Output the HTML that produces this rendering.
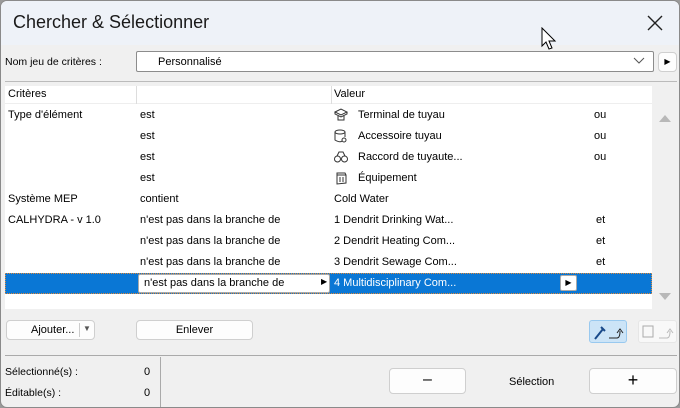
<!DOCTYPE html>
<html><head><meta charset="utf-8"><style>
*{box-sizing:border-box;margin:0;padding:0}
body{width:680px;height:408px;background:#9a9a9a;font-family:"Liberation Sans",sans-serif;font-size:11px;color:#000;overflow:hidden;position:relative}
.win{position:absolute;left:0;top:0;width:680px;height:408px;background:#f0f0f0;border:1px solid #8a8a8a;border-radius:7px;overflow:hidden}
.title{position:absolute;left:0;top:0;width:680px;height:44px;background:#eef2f8}
.t{position:absolute;white-space:nowrap}
.btn{position:absolute;background:#fdfdfd;border:1px solid #cfcfcf;border-radius:4px;text-align:center}
.list{position:absolute;left:4px;top:85px;width:647px;height:223px;background:#fff}
.ic{position:absolute;width:14px;height:14px}
</style></head><body><div class="win">
<div class="title"></div>
<div class="t" style="left:12px;top:11px;font-size:18px;color:#1a1a1a">Chercher &amp; Sélectionner</div>
<svg class="t" style="left:645px;top:13px" width="18" height="18"><path d="M2 2L16 16M16 2L2 16" stroke="#222" stroke-width="1.4"/></svg>
<svg class="t" style="left:540px;top:26px" width="20" height="26"><path d="M1 1L1 19L5 15L8 22L11 21L8 14L14 14Z" fill="#fff" stroke="#000" stroke-width="1"/></svg>
<div class="t" style="left:4px;top:55px;font-size:10.5px">Nom jeu de critères :</div>
<div style="position:absolute;left:135px;top:50px;width:518px;height:21px;background:#fff;border:1px solid #8c8c8c;border-radius:2px"></div>
<div class="t" style="left:157px;top:55px">Personnalisé</div>
<svg class="t" style="left:632px;top:56px" width="12" height="8"><path d="M1 1L6 6L11 1" stroke="#555" fill="none"/></svg>
<div class="btn" style="left:657px;top:51px;width:19px;height:20px;font-size:8px;line-height:18px">▶</div>
<div style="position:absolute;left:4px;top:80px;width:672px;height:1px;background:#bbb"></div>
<div class="list">
<div style="position:absolute;left:0;top:0;width:647px;height:18px;background:#fff;border-bottom:1px solid #eee"></div>
<div style="position:absolute;left:131px;top:0;width:1px;height:18px;background:#ddd"></div>
<div style="position:absolute;left:326px;top:0;width:1px;height:18px;background:#ddd"></div>
<div style="position:absolute;left:0;top:187px;width:647px;height:21px;background:#0a77d5;border:1px dotted #e08a3a"></div>
<div style="position:absolute;left:133px;top:188px;width:192px;height:19px;background:#fff;border:1px solid #aaa;border-radius:2px"></div>
<div class="t" style="left:316px;top:191px;font-size:8px">▶</div>
<div style="position:absolute;left:555px;top:189px;width:17px;height:16px;background:#fff;border:1px solid #aaa;border-radius:2px;font-size:8px;text-align:center;line-height:14px">▶</div>
</div>
<div class="t" style="left:7px;top:87px">Critères</div>
<div class="t" style="left:333px;top:87px">Valeur</div>
<div class="t" style="left:7px;top:108px">Type d'élément</div>
<div class="t" style="left:7px;top:192px">Système MEP</div>
<div class="t" style="left:7px;top:213px">CALHYDRA - v 1.0</div>
<div class="t" style="left:139px;top:108px">est</div>
<div class="t" style="left:139px;top:129px">est</div>
<div class="t" style="left:139px;top:150px">est</div>
<div class="t" style="left:139px;top:171px">est</div>
<div class="t" style="left:139px;top:192px">contient</div>
<div class="t" style="left:139px;top:213px">n'est pas dans la branche de</div>
<div class="t" style="left:139px;top:234px">n'est pas dans la branche de</div>
<div class="t" style="left:139px;top:255px">n'est pas dans la branche de</div>
<div class="t" style="left:143px;top:276px">n'est pas dans la branche de</div>
<svg class="ic" style="left:333px;top:107px" viewBox="0 0 14 14"><path d="M1 4L7 1L13 4L7 7Z M1 4V6L7 9L13 6V4 M4 8V12H10V8" fill="none" stroke="#333"/></svg>
<svg class="ic" style="left:333px;top:128px" viewBox="0 0 14 14"><ellipse cx="6" cy="3" rx="5" ry="2" fill="none" stroke="#333"/><path d="M1 3V11Q6 14 8 12M11 3V8" fill="none" stroke="#333"/><circle cx="10" cy="11" r="2" fill="none" stroke="#333"/></svg>
<svg class="ic" style="left:333px;top:149px" viewBox="0 0 14 14"><circle cx="3.5" cy="9" r="3" fill="none" stroke="#333"/><circle cx="10.5" cy="9" r="3" fill="none" stroke="#333"/><path d="M3 6L5 2H9L11 6" fill="none" stroke="#333"/></svg>
<svg class="ic" style="left:333px;top:170px" viewBox="0 0 14 14"><path d="M3 2L11 2L12 4V12L3 13V4Z M3 4H12 M6 6V11 M9 6V11" fill="none" stroke="#333"/></svg>
<div class="t" style="left:357px;top:108px">Terminal de tuyau</div>
<div class="t" style="left:357px;top:129px">Accessoire tuyau</div>
<div class="t" style="left:357px;top:150px">Raccord de tuyaute...</div>
<div class="t" style="left:357px;top:171px">Équipement</div>
<div class="t" style="left:333px;top:192px">Cold Water</div>
<div class="t" style="left:333px;top:213px">1 Dendrit Drinking Wat...</div>
<div class="t" style="left:333px;top:234px">2 Dendrit Heating Com...</div>
<div class="t" style="left:333px;top:255px">3 Dendrit Sewage Com...</div>
<div class="t" style="left:333px;top:276px;color:#fff">4 Multidisciplinary Com...</div>
<div class="t" style="left:593px;top:108px">ou</div>
<div class="t" style="left:593px;top:129px">ou</div>
<div class="t" style="left:593px;top:150px">ou</div>
<div class="t" style="left:595px;top:234px">et</div>
<div class="t" style="left:595px;top:213px">et</div>
<div class="t" style="left:595px;top:255px">et</div>
<svg class="t" style="left:658px;top:113px" width="12" height="9"><path d="M0 8L6 1L12 8Z" fill="#b8b8b8"/></svg>
<svg class="t" style="left:658px;top:291px" width="12" height="9"><path d="M0 1L6 8L12 1Z" fill="#b8b8b8"/></svg>
<div class="btn" style="left:5px;top:319px;width:89px;height:20px;line-height:18px;text-align:left;padding-left:24px">Ajouter...</div>
<div style="position:absolute;left:78px;top:322px;width:1px;height:14px;background:#ccc"></div>
<div class="t" style="left:82px;top:323px;font-size:8px;color:#555">▼</div>
<div class="btn" style="left:135px;top:319px;width:117px;height:20px;line-height:18px">Enlever</div>
<div style="position:absolute;left:588px;top:319px;width:38px;height:23px;background:#cce4f7;border:1px solid #99c9ef;border-radius:3px"></div>
<svg class="t" style="left:592px;top:322px" width="32" height="18"><path d="M2 16L10 6M8 4L12 8" stroke="#1a4a8a" stroke-width="2"/><path d="M16 15H24Q27 15 27 8M24 10L27 6L30 10" stroke="#222" fill="none"/></svg>
<div style="position:absolute;left:637px;top:319px;width:39px;height:23px;background:#f8f8f8;border:1px solid #e6e6e6;border-radius:3px"></div>
<svg class="t" style="left:640px;top:322px" width="34" height="18"><rect x="2" y="3" width="10" height="11" fill="none" stroke="#aaa"/><path d="M18 15H26Q29 15 29 8M26 10L29 6L32 10" stroke="#bbb" fill="none"/></svg>
<div style="position:absolute;left:4px;top:354px;width:672px;height:1px;background:#aaa"></div>
<div style="position:absolute;left:159px;top:356px;width:1px;height:50px;background:#aaa"></div>
<div class="t" style="left:4px;top:365px;font-size:10.5px">Sélectionné(s) :</div>
<div class="t" style="left:4px;top:386px;font-size:10.5px">Éditable(s) :</div>
<div class="t" style="left:143px;top:365px">0</div>
<div class="t" style="left:143px;top:386px">0</div>
<div class="btn" style="left:388px;top:367px;width:77px;height:26px;line-height:22px;font-size:16px">–</div>
<div class="t" style="left:508px;top:375px">Sélection</div>
<div class="btn" style="left:588px;top:367px;width:88px;height:26px;line-height:22px;font-size:18px">+</div>
</div></body></html>
